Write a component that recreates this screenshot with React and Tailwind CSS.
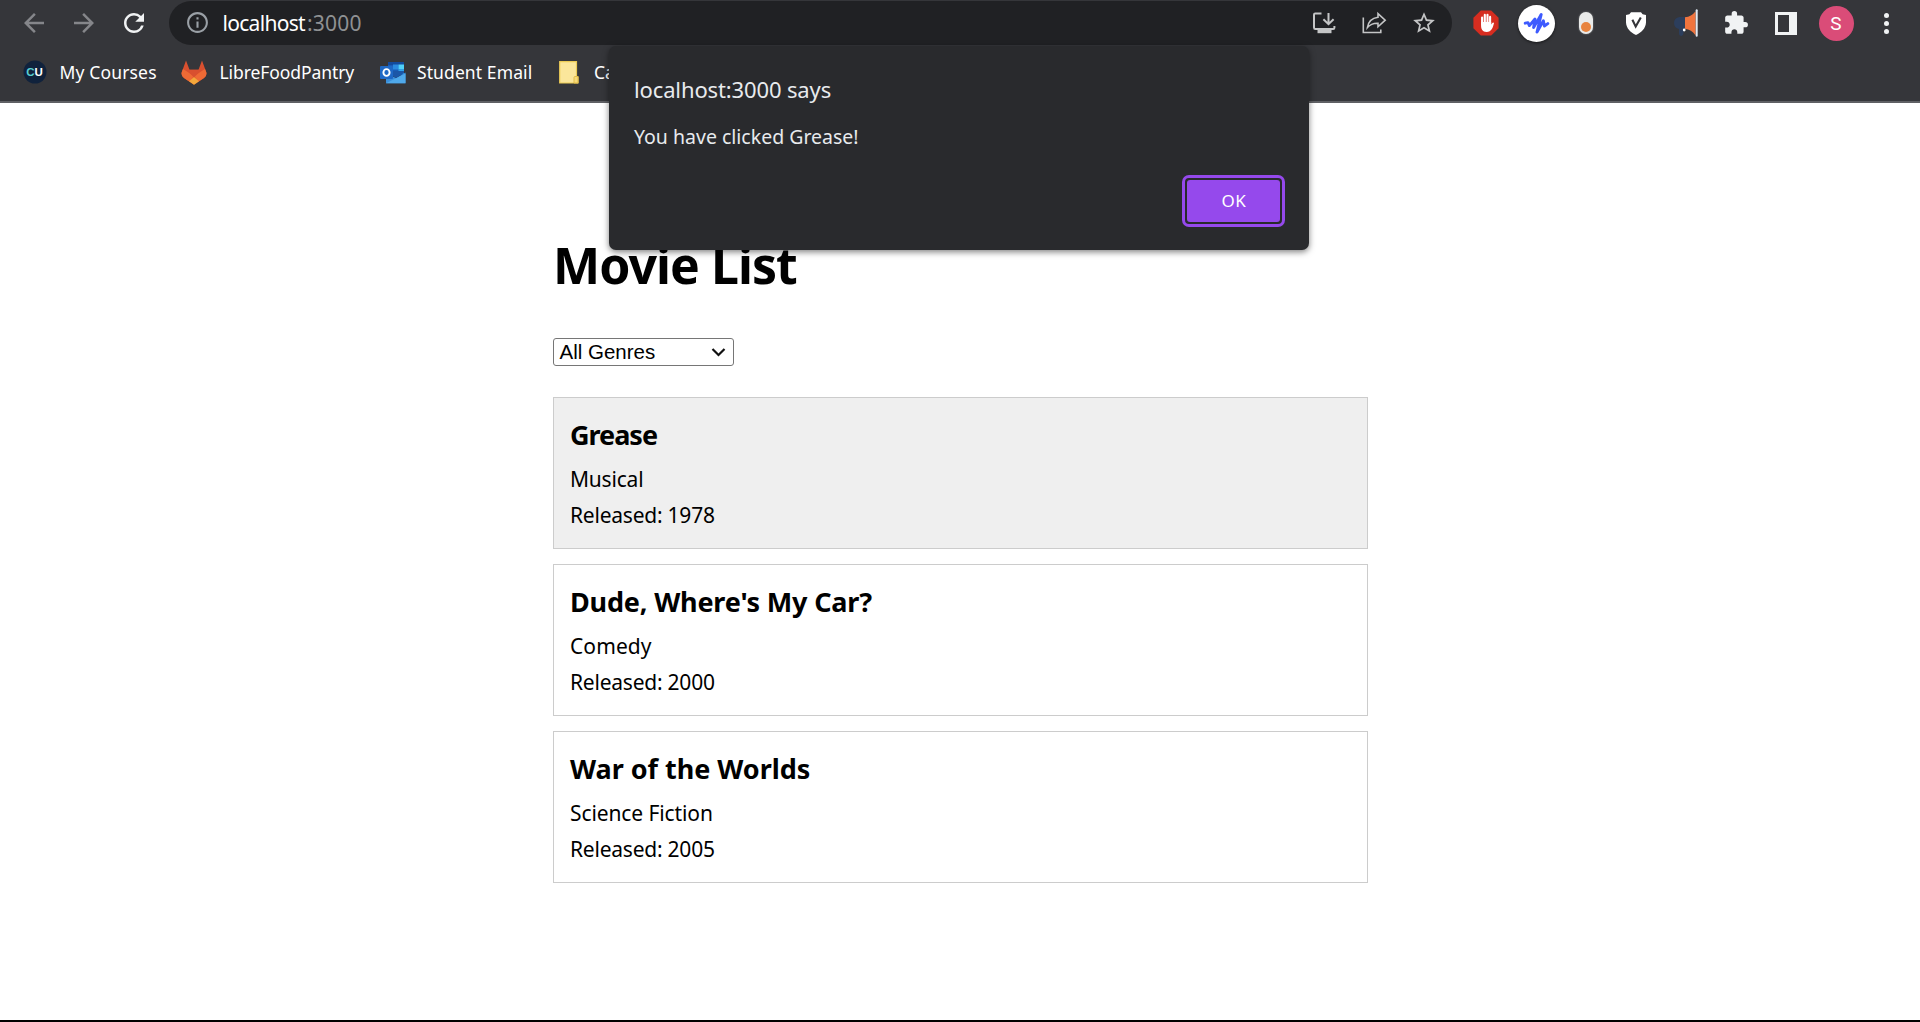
import React from "react";
import {
  MdArrowBack,
  MdArrowForward,
  MdRefresh,
  MdInfoOutline,
  MdStarBorder,
  MdExtension,
} from "react-icons/md";

function InstallIcon() {
  return (
    <svg width="24" height="24" viewBox="0 0 24 24" fill="none" stroke="#c4c5c6" strokeWidth="2">
      <path d="M9.5 2.6H3.2Q2 2.6 2 3.8V16.5Q2 18 3.4 18H21.2Q22.4 18 22.4 16.8V15" />
      <path d="M16.5 2V12.5M11.4 8.2L16.5 13.2L21.6 8.2" />
      <path d="M5.5 20.5H19.5" strokeWidth="3.4" />
    </svg>
  );
}

function ShareIcon() {
  return (
    <svg width="26" height="24" viewBox="0 0 26 24" fill="none" stroke="#c4c5c6" strokeWidth="1.6">
      <path d="M2.3 6.5V21.5H19.8V18.5" />
      <path d="M17 2.6L24.2 9.2L17 15.8V12.2C12.2 12 9 13.4 6.4 16.6C7.2 11 10.6 7 17 6.2Z" strokeLinejoin="miter" />
    </svg>
  );
}

function BlockIcon() {
  return (
    <svg width="26" height="26" viewBox="0 0 26 26">
      <path d="M7.8.4H18.2L25.6 7.8V18.2L18.2 25.6H7.8L.4 18.2V7.8Z" fill="#d62d20" />
      <g stroke="#fff" strokeWidth="2.1" strokeLinecap="round" fill="none">
        <path d="M9.1 14V7.6M11.8 13V4.9M14.5 13V4.9M17.1 14V6.9" />
      </g>
      <path d="M8.05 12H18.2V14.5L19.6 12.8Q20.8 12.2 21 13.2C19.8 17.4 18.6 22 13.6 22C9.4 22 8.05 19 8.05 15.5Z" fill="#fff" />
    </svg>
  );
}

function WaveIcon() {
  return (
    <span className="flex h-[37px] w-[37px] items-center justify-center rounded-full bg-white shadow-[0_1px_3px_rgba(0,0,0,0.6)]">
      <svg width="27" height="24" viewBox="0 0 27 24" fill="none" stroke="#3d5afe" strokeWidth="2.9" strokeLinecap="round" strokeLinejoin="round">
        <path d="M2.2 12.2L5 11.6L6.4 14.6L12 8L10.6 16.6L18.2 3.4L14 21L20.4 9.8L21.4 15L24.8 12.6" />
      </svg>
    </span>
  );
}

function PillIcon() {
  return (
    <span className="flex h-[22px] w-[14px] items-end justify-center rounded-full bg-[#e9eae9] pb-[2px] shadow-[0_0_2px_rgba(255,255,255,0.4)]">
      <span className="h-[10px] w-[10px] rounded-full bg-[#e8833e]" />
    </span>
  );
}

function ShieldIcon() {
  return (
    <svg width="24" height="25" viewBox="0 0 24 25">
      <path d="M7 1.2H17L18.6 3.2L22 4V11.5C21.6 17.4 17.5 21.6 12 24C6.5 21.6 2.4 17.4 2 11.5V4L5.4 3.2Z" fill="#fff" />
      <path d="M8.4 8.8L11.7 15.6L16.8 6.5" fill="none" stroke="#35363a" strokeWidth="2.1" />
    </svg>
  );
}

function MegaphoneIcon() {
  return (
    <svg width="26" height="28" viewBox="0 0 26 28">
      <path d="M12 8H6.5Q1 9 1 14Q1 19 6 20V24Q6 27 8.5 27Q10.5 26.5 10.5 24V20.5H12Z" fill="#2c3e5c" />
      <path d="M12 8.2Q18.5 7.6 22.6 2.2V26.5Q18.5 20.6 12 19.8Z" fill="#f0743e" />
      <path d="M23.7 1.2V26.8" stroke="#dfe9f2" strokeWidth="2" strokeLinecap="round" />
      <circle cx="11.2" cy="21" r="1.4" fill="#fff" />
    </svg>
  );
}

function CuIcon() {
  return (
    <svg width="24" height="24" viewBox="0 0 24 24">
      <circle cx="12" cy="12" r="11.5" fill="#10223c" />
      <text x="3.3" y="16.2" fontFamily="Liberation Sans, sans-serif" fontWeight="700" fontSize="11.5" fill="#58cfd0">C</text>
      <text x="11.6" y="16.2" fontFamily="Liberation Sans, sans-serif" fontWeight="700" fontSize="11.5" fill="#fff">U</text>
    </svg>
  );
}

function GitlabIcon() {
  return (
    <svg width="26" height="25" viewBox="0 0 26 25">
      <path d="M5 .5L8.5 9.8H17.5L21 .5L25.2 12Q26.2 15.6 23 18L13 24.8L3 18Q-.2 15.6.8 12Z" fill="#d9502f" />
      <path d="M.8 12Q-.2 15.6 3 18L8.3 21.6L13 16L2 9Z" fill="#ee6a35" />
      <path d="M25.2 12Q26.2 15.6 23 18L17.7 21.6L13 16L24 9Z" fill="#ee6a35" />
      <path d="M5.4 9.8H20.6L13 17.4Z" fill="#d9502f" />
      <path d="M13 17L18 21.3L13 24.8L8 21.3Z" fill="#f3a83b" />
    </svg>
  );
}

function OutlookIcon() {
  return (
    <svg width="26" height="23" viewBox="0 0 26 23">
      <path d="M8 1H24V14H8Z" fill="#1a5cb5" />
      <path d="M8 1H24V4H8Z" fill="#134a9c" />
      <path d="M13 3.5H18.5V8.5H13Z" fill="#2b8be0" />
      <path d="M18.5 3.5H24V8.5H18.5Z" fill="#50d0f8" />
      <path d="M18.5 8.5H24V13H18.5Z" fill="#2fa4ec" />
      <path d="M6 12L16 17L25.5 11.5V22.3H6Z" fill="#3a8fdc" />
      <path d="M6 22.3L25.5 12.5V22.3Z" fill="#4fa9ea" />
      <path d="M8 12L16 17L24 12V10H8Z" fill="#1b57a8" />
      <rect x="0" y="5" width="13" height="13" rx="1" fill="#1f69c6" />
      <ellipse cx="6.5" cy="11.5" rx="3.1" ry="3.4" fill="none" stroke="#fff" strokeWidth="1.9" />
    </svg>
  );
}

function FolderIcon() {
  return (
    <svg width="20" height="23" viewBox="0 0 20 23">
      <path d="M.7.7H17.5V15.5L19 16V22H.7Z" fill="#fbe69b" stroke="#eccb55" strokeWidth="1.2" />
      <path d="M15 22V16.5Q15 15.5 16 15.5H19V22Z" fill="#f7da79" stroke="#e3bd48" />
    </svg>
  );
}

const Slot = ({ children }) => (
  <span className="flex h-[46px] w-[50px] shrink-0 items-center justify-center">{children}</span>
);

function Toolbar() {
  return (
    <div className="flex h-[46px] pl-[9px]">
      <Slot><MdArrowBack size={30} color="#85868a" /></Slot>
      <Slot><MdArrowForward size={30} color="#85868a" /></Slot>
      <Slot><MdRefresh size={30} color="#f1f3f4" /></Slot>
      <div className="mt-px ml-[10px] flex h-[44px] w-[1283px] shrink-0 items-center rounded-full bg-[#202124] pr-[3px] pb-px pl-[16px]">
        <MdInfoOutline size={25} color="#9aa0a6" />
        <span className="ml-[12.5px] text-[21px] leading-[30px] tracking-[-0.7px] text-white">localhost</span>
        <span className="ml-[2px] text-[21px] leading-[30px] tracking-[0.2px] text-[#8f9193]">:3000</span>
        <span className="ml-auto flex items-center">
          <Slot><InstallIcon /></Slot>
          <Slot><ShareIcon /></Slot>
          <Slot><MdStarBorder size={26} color="#c4c5c6" /></Slot>
        </span>
      </div>
      <div className="ml-[9px] flex">
        <Slot><BlockIcon /></Slot>
        <Slot><WaveIcon /></Slot>
        <Slot><PillIcon /></Slot>
        <Slot><ShieldIcon /></Slot>
        <Slot><MegaphoneIcon /></Slot>
        <Slot><MdExtension size={26} color="#f1f3f4" /></Slot>
        <Slot>
          <span className="h-[23px] w-[22px] border-[3px] border-r-[8px] border-[#f1f3f4]" />
        </Slot>
        <Slot>
          <span className="flex h-[35px] w-[35px] items-center justify-center rounded-full bg-[#da4c78] font-[Roboto] text-[19px] leading-none text-white">S</span>
        </Slot>
        <Slot>
          <span className="flex flex-col gap-[3px]">
            <span className="h-[5px] w-[5px] rounded-full bg-[#f1f3f4]" />
            <span className="h-[5px] w-[5px] rounded-full bg-[#f1f3f4]" />
            <span className="h-[5px] w-[5px] rounded-full bg-[#f1f3f4]" />
          </span>
        </Slot>
      </div>
    </div>
  );
}

function Bookmarks() {
  return (
    <div className="flex h-[55px] items-center pb-[3px] pl-[22.5px] text-[17.5px] leading-[26px] text-white">
      <div className="flex w-[158px] items-center"><CuIcon /><span className="ml-[13px] tracking-[0.15px]">My Courses</span></div>
      <div className="flex w-[199.5px] items-center"><GitlabIcon /><span className="ml-[13px] tracking-[-0.08px]">LibreFoodPantry</span></div>
      <div className="flex w-[179px] items-center"><OutlookIcon /><span className="ml-[11px] tracking-[0.1px]">Student Email</span></div>
      <div className="flex items-center"><FolderIcon /><span className="ml-[15px]">Ca</span></div>
    </div>
  );
}

function AlertDialog() {
  return (
    <div className="absolute top-[46px] left-[609px] flex h-[204px] w-[700px] flex-col rounded-[7px] bg-[#292a2d] pt-[27px] pr-[24px] pl-[25px] text-[#e8eaed] shadow-[0_2px_6px_rgba(0,0,0,0.5)]">
      <p className="text-[22px] leading-[32px] tracking-[-0.13px]">localhost:3000 says</p>
      <p className="mt-[18px] text-[19.5px] leading-[28px]">You have clicked Grease!</p>
      <button className="mt-[24px] h-[52px] w-[103px] self-end rounded-[7px] border-[3px] border-[#9549ec] p-[2px]">
        <span className="flex h-full items-center justify-center rounded-[3px] bg-[#9549ec] pb-px pl-px text-[17px] leading-[26px] tracking-[0.5px] text-white">OK</span>
      </button>
    </div>
  );
}

function MovieCard({ title, genre, year, className }) {
  return (
    <article className={"h-[152px] border border-[#ccc] pt-[19px] pl-[16px] text-[21px] leading-[36px] " + className}>
      <h2 className="mb-[8px] text-[27px] font-bold">{title}</h2>
      <p>{genre}</p>
      <p className="tracking-[-0.23px]">Released: {year}</p>
    </article>
  );
}

export default function App() {
  return (
    <div className="relative flex h-[1022px] w-[1920px] flex-col overflow-hidden border-b-2 border-black bg-white font-['Noto_Sans',sans-serif] text-black">
      <header className="h-[103px] shrink-0 border-b-2 border-[#5f6064] bg-[#35363a]">
        <Toolbar />
        <Bookmarks />
      </header>
      <main className="ml-[553px] w-[815px] pt-[128px]">
        <h1 className="text-[50px] leading-[68px] font-bold tracking-[-0.97px]">Movie List</h1>
        <div className="mt-[39px] flex h-[28px] w-[181px] items-center justify-between rounded-[3px] border border-[#767676] pr-[7px] pl-[5.5px] font-['Liberation_Sans',Arial,sans-serif] text-[20.5px] leading-[24px]">
          All Genres
          <svg width="15" height="10" viewBox="0 0 15 10" fill="none" stroke="#111" strokeWidth="2.2">
            <path d="M1.5 2L7.5 8L13.5 2" />
          </svg>
        </div>
        <section className="mt-[31px] flex flex-col gap-[15px]">
          <MovieCard title={<span className="tracking-[-1px]">Grease</span>} genre={<span className="tracking-[-0.2px]">Musical</span>} year="1978" className="bg-[#efefef]" />
          <MovieCard title={<span className="tracking-[-0.18px]">Dude, Where's My Car?</span>} genre={<span className="tracking-[0.1px]">Comedy</span>} year="2000" className="bg-white" />
          <MovieCard title={<span className="tracking-[-0.03px]">War of the Worlds</span>} genre={<span className="tracking-[-0.1px]">Science Fiction</span>} year="2005" className="bg-white" />
        </section>
      </main>
      <AlertDialog />
    </div>
  );
}
